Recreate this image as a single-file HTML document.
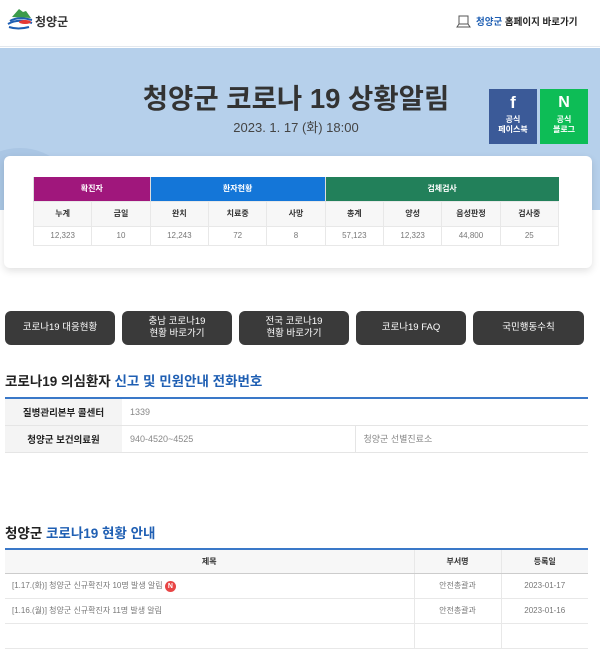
<!DOCTYPE html>
<html><head><meta charset="utf-8"><style>
*{margin:0;padding:0;box-sizing:border-box}
body{width:600px;height:629px;overflow:hidden;background:#fff;font-family:"Liberation Sans","Noto Sans CJK KR",sans-serif;color:#333;position:relative}
.abs{position:absolute}
.hdr{top:0;left:0;width:600px;height:47px;border-bottom:1px solid #e3e8ee}
.banner{top:48px;left:0;width:600px;height:162px;background:#b6d0eb;overflow:hidden}
.title{top:76px;left:0;width:592px;text-align:center;font-size:27.5px;font-weight:bold;color:#333}
.date{top:117px;left:0;width:592px;text-align:center;font-size:13px;color:#444}
.sns{top:89px;width:48px;height:55px;color:#fff;text-align:center;font-size:8px;font-weight:bold;line-height:10px}
.card{top:156px;left:4px;width:588px;height:112px;background:#fff;border-radius:6px;box-shadow:0 3px 8px rgba(0,0,0,.12)}
table{border-collapse:collapse;table-layout:fixed}
.st{top:177px;left:33px;width:526px;font-size:8px;text-align:center}
.st th,.st td{border:1px solid #e8e8e8}
.st .h th{height:24px;color:#fff;border:none;border-left:1px solid #ddd}
.st .s th{height:25px;background:#f7f7f7;color:#333}
.st td{height:19px;color:#777}
.btn{top:311px;height:34px;width:110px;background:#3a3a3a;border-radius:6px;color:#fff;font-size:9.5px;display:flex;align-items:center;justify-content:center;text-align:center;line-height:12px}
h3{position:absolute;left:5px;font-size:13.5px;font-weight:bold;color:#222}
h3 span{color:#1f5fb3}
.t1{top:397px;left:5px;width:583px;border-top:2px solid #3a78c8;font-size:9px}
.t1 td{height:27px;border-bottom:1px solid #e5e5e5;color:#888;padding-left:8px}
.t1 th{background:#f4f4f4;height:27px;border-bottom:1px solid #e5e5e5;color:#222;text-align:center;font-size:9.5px}
.t2{top:548px;left:5px;width:583px;border-top:2px solid #3a78c8;font-size:8px}
.t2 th{height:24px;background:#f7f7f7;color:#333;border-bottom:1px solid #ccc;border-left:1px solid #e8e8e8}
.t2 td{height:25px;border-bottom:1px solid #e8e8e8;border-left:1px solid #e8e8e8;color:#777;text-align:center}
</style></head><body>
<div class="abs hdr">
 <svg class="abs" style="left:6px;top:7px" width="28" height="24" viewBox="0 0 28 24"><path d="M6 10 L13 2 L17 5 L20 4 L25 11 Z" fill="#3a9b4a"/><path d="M4 14 q8 -5 22 -1" stroke="#1f5fb3" stroke-width="2" fill="none"/><path d="M2 17 q10 -6 24 -1" stroke="#1f5fb3" stroke-width="2" fill="none"/><ellipse cx="19" cy="15" rx="6" ry="2" fill="#e53935"/><path d="M3 20 q9 3 20 0" stroke="#1f5fb3" stroke-width="2" fill="none"/></svg>
 <div class="abs" style="left:35px;top:13px;font-size:12px;font-weight:bold;color:#333">청양군</div>
 <svg class="abs" style="left:456px;top:14px" width="15" height="14" viewBox="0 0 15 14"><rect x="3" y="2" width="9" height="8" fill="none" stroke="#555"/><path d="M1 13 L3 10 H12 L14 13 Z" fill="none" stroke="#555"/></svg>
 <div class="abs" style="left:476px;top:14px;font-size:9.5px;font-weight:bold;color:#222"><span style="color:#1f5fb3">청양군</span> 홈페이지 바로가기</div>
</div>
<div class="abs banner">
 <div class="abs" style="left:-40px;top:100px;width:120px;height:120px;border-radius:50%;background:#aac6e4"></div>
</div>
<div class="abs title">청양군 코로나 19 상황알림</div>
<div class="abs date">2023. 1. 17 (화) 18:00</div>
<div class="abs sns" style="left:489px;background:#3b5a98"><div style="font-size:17px;line-height:24px;margin-top:2px">f</div>공식<br>페이스북</div>
<div class="abs sns" style="left:540px;background:#0dbd56"><div style="font-size:16px;line-height:24px;margin-top:2px">N</div>공식<br>블로그</div>
<div class="abs card"></div>
<table class="abs st">
<tr class="h"><th colspan="2" style="background:#a0177c">확진자</th><th colspan="3" style="background:#1476d8">환자현황</th><th colspan="4" style="background:#22805a">검체검사</th></tr>
<tr class="s"><th>누계</th><th>금일</th><th>완치</th><th>치료중</th><th>사망</th><th>총계</th><th>양성</th><th>음성판정</th><th>검사중</th></tr>
<tr><td>12,323</td><td>10</td><td>12,243</td><td>72</td><td>8</td><td>57,123</td><td>12,323</td><td>44,800</td><td>25</td></tr>
</table>
<div class="abs btn" style="left:5px">코로나19 대응현황</div>
<div class="abs btn" style="left:122px">충남 코로나19<br>현황 바로가기</div>
<div class="abs btn" style="left:239px">전국 코로나19<br>현황 바로가기</div>
<div class="abs btn" style="left:356px">코로나19 FAQ</div>
<div class="abs btn" style="left:473px;width:111px">국민행동수칙</div>
<h3 style="top:370px">코로나19 의심환자 <span>신고 및 민원안내 전화번호</span></h3>
<table class="abs t1">
<tr><th style="width:117px">질병관리본부 콜센터</th><td colspan="2">1339</td></tr>
<tr><th>청양군 보건의료원</th><td style="width:235px;border-right:1px solid #e5e5e5">940-4520~4525</td><td>청양군 선별진료소</td></tr>
</table>
<h3 style="top:522px">청양군 <span>코로나19 현황 안내</span></h3>
<table class="abs t2">
<tr><th style="border-left:none">제목</th><th style="width:87px">부서명</th><th style="width:87px">등록일</th></tr>
<tr><td style="text-align:left;padding-left:7px;border-left:none">[1.17.(화)] 청양군 신규확진자 10명 발생 알림 <span style="display:inline-block;width:11px;height:11px;border-radius:50%;background:#e84545;color:#fff;font-size:7px;line-height:11px;text-align:center;font-weight:bold">N</span></td><td>안전총괄과</td><td>2023-01-17</td></tr>
<tr><td style="text-align:left;padding-left:7px;border-left:none">[1.16.(월)] 청양군 신규확진자 11명 발생 알림</td><td>안전총괄과</td><td>2023-01-16</td></tr>
<tr><td style="border-left:none"></td><td></td><td></td></tr>
</table>
</body></html>
